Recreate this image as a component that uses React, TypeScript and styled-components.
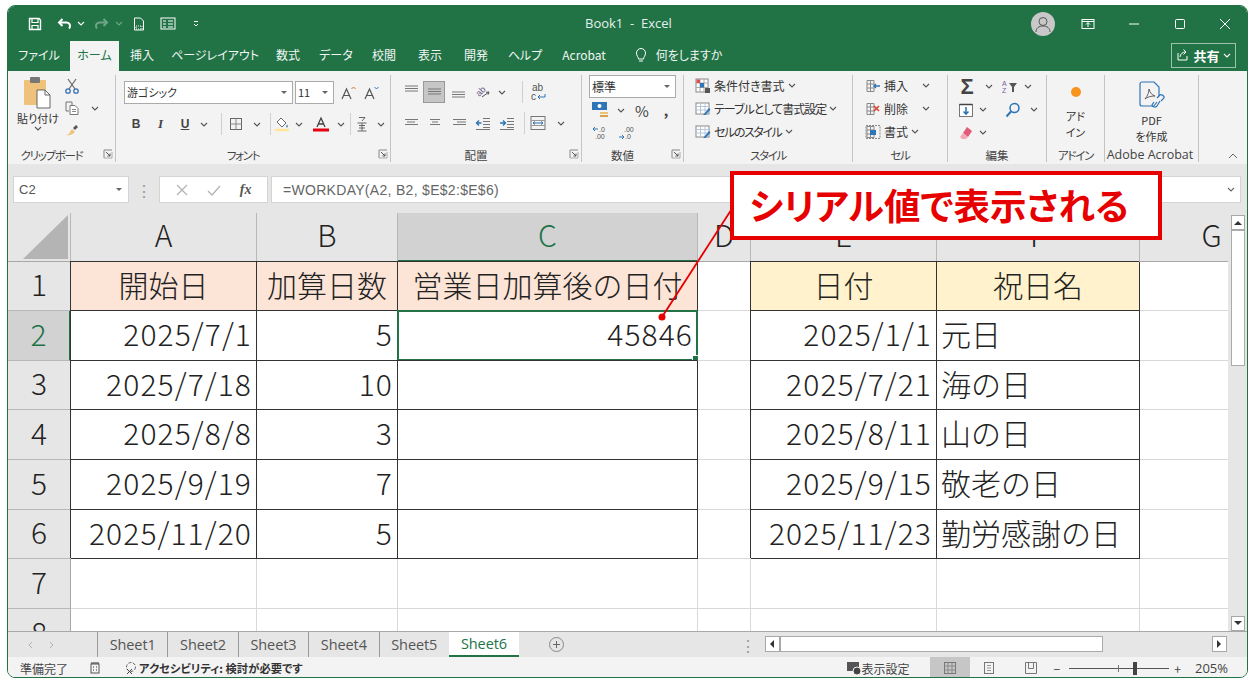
import React from 'react';
import styled, { createGlobalStyle } from 'styled-components';

const GREEN = '#217346';
const RED = '#e60000';
const JP = '"Noto Sans CJK JP", "Noto Sans", sans-serif';

const GlobalStyle = createGlobalStyle`
  html, body { margin: 0; padding: 0; background: #fff; }
  body { font-family: ${JP}; color: #333; overflow: hidden; }
  * { box-sizing: border-box; }
`;

const IconSvg = styled.svg`
  display: block;
  flex: none;
`;

type SvgProps = { size?: number; h?: number; children: React.ReactNode };
const Ico = ({ size = 16, h, children }: SvgProps) => (
  <IconSvg width={size} height={h ?? size} viewBox={`0 0 ${size} ${h ?? size}`} fill="none">
    {children}
  </IconSvg>
);

const Chev = ({ c = '#555' }: { c?: string }) => (
  <IconSvg width="8" height="5" viewBox="0 0 8 5" fill="none">
    <path d="M1 1l3 3 3-3" stroke={c} strokeWidth="1.1" />
  </IconSvg>
);

const Lines = ({ rows, top = 4.5 }: { rows: [number, number][]; top?: number }) => (
  <Ico size={16}>
    {rows.map(([a, b], i) => (
      <path key={i} d={`M${a} ${top + i * 2.5}H${b}`} stroke="#777" strokeWidth="1" />
    ))}
  </Ico>
);

const Tool = styled.div<{ $w?: number; $on?: boolean; $sep?: boolean; $h?: number; $pl?: number }>`
  width: ${(p) => p.$w ?? 20}px;
  height: ${(p) => p.$h ?? 22}px;
  padding-left: ${(p) => p.$pl ?? 0}px;
  flex: none;
  display: flex;
  align-items: center;
  justify-content: center;
  font-size: 12px;
  color: #444;
  background: ${(p) => (p.$on ? '#c6c6c6' : 'transparent')};
  border: ${(p) => (p.$on ? '1px solid #999' : 'none')};
  border-right: ${(p) => (p.$sep ? '1px solid #d0d0d0' : undefined)};
`;

const BoldGlyph = styled(Tool)`
  font: 700 12px "Liberation Sans", sans-serif;
`;

const ItalicGlyph = styled(Tool)`
  font: italic 700 13px "Liberation Serif", serif;
`;

const UnderGlyph = styled(BoldGlyph)`
  text-decoration: underline;
`;

const PercentGlyph = styled(Tool)`
  font-size: 15px;
`;

const CommaGlyph = styled(Tool)`
  font-size: 14px;
  font-weight: 700;
`;

const SigmaGlyph = styled(Tool)`
  font: 700 22px "Liberation Sans", sans-serif;
  color: #444;
`;

const Window = styled.div`
  width: 1241px;
  height: 673px;
  margin: 5px 0 0 7px;
  border: 1px solid ${GREEN};
  border-radius: 8px;
  overflow: hidden;
  display: flex;
  flex-direction: column;
  background: #f3f3f3;
`;

const TitleBar = styled.header`
  height: 35px;
  flex: none;
  background: ${GREEN};
  display: flex;
  align-items: center;
  position: relative;
  padding: 0 0 0 17px;
  color: #fff;
`;

const Qat = styled.div<{ $w: number; $dim?: boolean; $ml?: number }>`
  width: ${(p) => p.$w}px;
  margin-left: ${(p) => p.$ml ?? 0}px;
  flex: none;
  display: flex;
  justify-content: center;
  opacity: ${(p) => (p.$dim ? 0.35 : 1)};
`;

const Title = styled.div`
  position: absolute;
  left: 577px;
  top: 9px;
  font-size: 13px;
  line-height: 16px;
  color: #e6f0ea;
  white-space: pre;
  font-family: "Open Sans", sans-serif;
`;

const Spacer = styled.div`
  flex: 1;
`;

const Avatar = styled.div`
  width: 24px;
  height: 24px;
  border-radius: 50%;
  background: #c8c8c8;
  margin-right: 10px;
  display: flex;
  align-items: center;
  justify-content: center;
`;

const TabBar = styled.nav`
  height: 30px;
  flex: none;
  background: ${GREEN};
  display: flex;
  align-items: stretch;
`;

const TabItem = styled.div<{ $w: number; $active?: boolean }>`
  width: ${(p) => p.$w}px;
  flex: none;
  display: flex;
  align-items: center;
  justify-content: center;
  padding-bottom: 3px;
  font-size: 12px;
  white-space: nowrap;
  font-feature-settings: "palt";
  color: ${(p) => (p.$active ? '#217346' : '#f1f6f3')};
  background: ${(p) => (p.$active ? '#f3f3f3' : 'transparent')};
`;

const ShareButton = styled.div`
  width: 65px;
  height: 25px;
  margin: 2px 11px 0 0;
  border: 1px solid #9dc3ad;
  display: flex;
  align-items: center;
  justify-content: center;
  gap: 3px;
  padding-bottom: 1px;
  color: #fff;
  font-size: 13px;
  font-weight: 700;
`;

const Ribbon = styled.section`
  height: 93px;
  flex: none;
  display: flex;
  background: #f3f3f3;
  position: relative;
`;

const Group = styled.div<{ $w: number }>`
  width: ${(p) => p.$w}px;
  flex: none;
  margin-top: 4px;
  margin-bottom: 2px;
  border-right: 1px solid #c4c4c4;
  display: flex;
  flex-direction: column;
  position: relative;
`;

const GroupBody = styled.div`
  flex: 1;
  min-height: 0;
  display: flex;
`;

const GroupLabel = styled.div<{ $launcher?: boolean; $kana?: boolean }>`
  height: 15px;
  flex: none;
  display: flex;
  align-items: center;
  justify-content: center;
  padding-right: ${(p) => (p.$launcher ? 20 : 0)}px;
  font-size: 11.5px;
  letter-spacing: ${(p) => (p.$kana ? -1.3 : 0)}px;
  font-feature-settings: "palt";
  color: #444;
  white-space: nowrap;
`;

const AcrobatLabel = styled(GroupLabel)`
  font: 12.5px "Open Sans", sans-serif;
  padding-right: 3px;
`;

const LauncherWrap = styled.div`
  position: absolute;
  right: 2px;
  bottom: 3px;
`;

const Launcher = () => (
  <LauncherWrap>
    <Ico size={10}>
      <path d="M1 9V1h8" stroke="#888" />
      <path d="M1 9h8V3" stroke="#aaa" />
      <path d="M3 3l4 4M7 4.500V7H4.500" stroke="#555" />
    </Ico>
  </LauncherWrap>
);

const Stack = styled.div<{ $w?: number; $pl?: number; $pt?: number; $gap?: number; $center?: boolean }>`
  width: ${(p) => (p.$w ? `${p.$w}px` : 'auto')};
  flex: none;
  padding-left: ${(p) => p.$pl ?? 0}px;
  padding-top: ${(p) => p.$pt ?? 0}px;
  display: flex;
  flex-direction: column;
  gap: ${(p) => p.$gap ?? 0}px;
  align-items: ${(p) => (p.$center ? 'center' : 'flex-start')};
`;

const Row = styled.div`
  display: flex;
  align-items: center;
`;

const SmallText = styled.div`
  font-size: 11px;
  line-height: 16px;
  font-feature-settings: "palt";
  color: #333;
  text-align: center;
  white-space: nowrap;
`;

const Select = styled.div<{ $w: number; $ml?: number; $large?: boolean }>`
  width: ${(p) => p.$w}px;
  height: 23px;
  margin-left: ${(p) => p.$ml ?? 0}px;
  flex: none;
  background: #fff;
  border: 1px solid #ababab;
  display: flex;
  align-items: center;
  justify-content: space-between;
  padding: 0 5px 1px 2px;
  font-size: ${(p) => (p.$large ? 12 : 11)}px;
  font-feature-settings: "palt";
  color: #333;
`;

const Arrow = styled.div`
  width: 0;
  height: 0;
  border-left: 3px solid transparent;
  border-right: 3px solid transparent;
  border-top: 3px solid #666;
`;

const StyleItem = styled.div<{ $w?: number; $track?: number }>`
  height: 23px;
  width: ${(p) => (p.$w ? `${p.$w}px` : 'auto')};
  padding-bottom: 2px;
  display: flex;
  align-items: center;
  gap: 3px;
  font-size: 12px;
  font-feature-settings: "palt";
  letter-spacing: ${(p) => p.$track ?? 0}px;
  color: #333;
  white-space: nowrap;
`;

const Collapse = styled.div`
  position: absolute;
  right: 9px;
  bottom: 5px;
`;

const FormulaBand = styled.div`
  height: 49px;
  flex: none;
  background: #e6e6e6;
  padding: 12px 6px 10px 5px;
  display: flex;
  align-items: stretch;
`;

const NameBox = styled.div`
  width: 116px;
  background: #fff;
  border: 1px solid #d4d4d4;
  display: flex;
  align-items: center;
  justify-content: space-between;
  padding: 0 6px 0 5px;
  font: 13px "Liberation Sans", sans-serif;
  color: #555;
`;

const Grip = styled.div`
  width: 30px;
  display: flex;
  align-items: center;
  justify-content: center;
  color: #999;
`;

const FxBox = styled.div`
  width: 109px;
  margin-right: 3px;
  background: #fff;
  border: 1px solid #d4d4d4;
  display: flex;
  align-items: center;
  justify-content: space-around;
  padding: 0 6px;
`;

const FxLabel = styled.i`
  font: italic 700 14px "Liberation Serif", serif;
  color: #555;
`;

const FormulaInput = styled.div`
  flex: 1;
  background: #fff;
  border: 1px solid #d4d4d4;
  display: flex;
  align-items: center;
  justify-content: space-between;
  padding: 0 5px 0 11px;
  font: 14px "Liberation Sans", sans-serif;
  color: #666;
  letter-spacing: 0.3px;
`;

const SheetArea = styled.div`
  height: 418px;
  flex: none;
  display: flex;
  background: #e6e6e6;
  overflow: hidden;
`;

const Cells = styled.div`
  width: 1220px;
  flex: none;
  overflow: hidden;
  display: grid;
  grid-template-columns: 63px 186px 141px 300px 53px 186px 203px 144px;
  grid-template-rows: 49px 49px 50px 49px 50px 50px 49px 50px 50px;
  background: #fff;
  font-size: 30px;
  font-weight: 300;
  line-height: 1;
  color: #222;
`;

const ColHead = styled.div<{ $sel?: boolean }>`
  background: ${(p) => (p.$sel ? '#d2d2d2' : '#e6e6e6')};
  color: ${(p) => (p.$sel ? GREEN : '#222')};
  border-right: 1px solid #b8b8b8;
  border-bottom: ${(p) => (p.$sel ? `2px solid ${GREEN}` : '1px solid #a8a8a8')};
  display: flex;
  align-items: center;
  justify-content: center;
  padding-bottom: 6px;
  overflow: hidden;
`;

const Corner = styled.div`
  background: #e6e6e6;
  border-right: 1px solid #b8b8b8;
  border-bottom: 1px solid #a8a8a8;
  display: flex;
  align-items: flex-end;
  justify-content: flex-end;
  padding: 0 2px 2px 0;
`;

const RowHead = styled.div<{ $sel?: boolean }>`
  background: ${(p) => (p.$sel ? '#d2d2d2' : '#e6e6e6')};
  color: ${(p) => (p.$sel ? GREEN : '#222')};
  border-right: ${(p) => (p.$sel ? `2px solid ${GREEN}` : '1px solid #a8a8a8')};
  border-bottom: 1px solid #b8b8b8;
  display: flex;
  align-items: center;
  justify-content: center;
  padding-bottom: 6px;
  overflow: hidden;
`;

const Cell = styled.div<{ $fill?: string; $edge?: boolean; $align?: string; $num?: boolean }>`
  position: relative;
  background: ${(p) => p.$fill ?? '#fff'};
  border-right: ${(p) => (p.$edge ? 'none' : '1px solid #d8d8d8')};
  border-bottom: ${(p) => (p.$edge ? 'none' : '1px solid #d8d8d8')};
  box-shadow: ${(p) => (p.$edge ? '-1px -1px 0 0 #333, inset -1px -1px 0 0 #333' : 'none')};
  display: flex;
  align-items: center;
  justify-content: ${(p) => p.$align ?? 'flex-end'};
  padding: 0 5px 6px 4px;
  white-space: nowrap;
  letter-spacing: ${(p) => (p.$num ? 1.1 : 0)}px;
`;

const ActiveFrame = styled.div`
  position: absolute;
  inset: -1px 0 0 -1px;
  border: 2px solid ${GREEN};
  pointer-events: none;
  &::after {
    content: '';
    position: absolute;
    right: -4px;
    bottom: -4px;
    width: 6px;
    height: 6px;
    background: ${GREEN};
    border: 1px solid #fff;
  }
`;

const VScroll = styled.div`
  flex: 1;
  padding: 2px 2px 0 3px;
  display: flex;
  flex-direction: column;
`;

const ScrollBtn = styled.div`
  height: 15px;
  flex: none;
  background: #fff;
  border: 1px solid #a8a8a8;
  display: flex;
  align-items: center;
  justify-content: center;
`;

const VThumb = styled.div`
  height: 136px;
  flex: none;
  background: #fff;
  border: 1px solid #ababab;
`;

const TabStrip = styled.div`
  height: 26px;
  flex: none;
  background: #e6e6e6;
  border-top: 1px solid #a8a8a8;
  display: flex;
  align-items: stretch;
`;

const NavArrows = styled.div`
  width: 89px;
  flex: none;
  padding-left: 20px;
  display: flex;
  align-items: center;
  gap: 16px;
`;

const SheetTab = styled.div<{ $active?: boolean }>`
  width: ${(p) => (p.$active ? 70 : 70.4)}px;
  flex: none;
  display: flex;
  align-items: center;
  justify-content: center;
  font: 14.5px "Open Sans", sans-serif;
  letter-spacing: -0.1px;
  color: ${(p) => (p.$active ? GREEN : '#555')};
  background: ${(p) => (p.$active ? '#fff' : 'transparent')};
  border-left: ${(p) => (p.$active ? 'none' : '1px solid #999')};
  border-bottom: ${(p) => (p.$active ? `2px solid ${GREEN}` : 'none')};
`;

const PlusWrap = styled.div`
  width: 76px;
  flex: none;
  display: flex;
  align-items: center;
  justify-content: center;
`;

const HScrollDots = styled.div`
  width: 170px;
  flex: none;
  display: flex;
  align-items: center;
  justify-content: flex-end;
  padding-right: 9px;
  color: #999;
`;

const HScroll = styled.div`
  width: 462px;
  height: 16px;
  margin-top: 4px;
  flex: none;
  display: flex;
  background: #e6e6e6;
`;

const HBtn = styled.div`
  width: 15px;
  flex: none;
  background: #fff;
  border: 1px solid #a8a8a8;
  display: flex;
  align-items: center;
  justify-content: center;
`;

const HThumb = styled.div`
  width: 323px;
  flex: none;
  background: #fff;
  border: 1px solid #ababab;
`;

const StatusBar = styled.footer`
  flex: 1;
  background: #f3f3f3;
  display: flex;
  align-items: center;
  padding-left: 12px;
  font-size: 12px;
  font-feature-settings: "palt";
  color: #444;
  white-space: nowrap;
`;

const A11y = styled.b`
  margin-left: 1px;
  font-size: 11.3px;
  color: #333;
`;

const ViewLabel = styled.span`
  margin-right: 20px;
`;

const ViewBtn = styled.div<{ $w: number; $on?: boolean }>`
  width: ${(p) => p.$w}px;
  align-self: stretch;
  flex: none;
  display: flex;
  align-items: center;
  justify-content: center;
  background: ${(p) => (p.$on ? '#c6c6c6' : 'transparent')};
`;

const ZoomTrack = styled.div`
  width: 100px;
  height: 1px;
  margin: 0 5px 0 9px;
  flex: none;
  background: #555;
  position: relative;
`;

const ZoomTick = styled.div`
  position: absolute;
  left: 49px;
  top: -3px;
  width: 1px;
  height: 7px;
  background: #777;
`;

const ZoomThumb = styled.div`
  position: absolute;
  left: 64px;
  top: -6px;
  width: 4px;
  height: 13px;
  background: #444;
`;

const ZoomValue = styled.span`
  margin: 0 19px 0 14px;
  font: 13px "Open Sans", sans-serif;
`;

const Callout = styled.div`
  position: absolute;
  left: 730px;
  top: 171px;
  width: 432px;
  height: 69px;
  background: #fff;
  border: 4px solid ${RED};
  display: flex;
  align-items: center;
  justify-content: center;
  padding: 0 14px 2px 0;
  color: ${RED};
  font-size: 36.5px;
  font-weight: 700;
  white-space: nowrap;
  font-feature-settings: "palt";
`;

const Leader = styled.svg`
  position: absolute;
  left: 650px;
  top: 190px;
`;

const tabs: [string, number, boolean?][] = [
  ['ファイル', 62], ['ホーム', 49, true], ['挿入', 46], ['ページレイアウト', 100], ['数式', 46], ['データ', 50],
  ['校閲', 46], ['表示', 46], ['開発', 46], ['ヘルプ', 52], ['Acrobat', 66],
];

const columns = ['A', 'B', 'C', 'D', 'E', 'F', 'G'];
const peach = '#fce4d6';
const cream = '#fff2cc';

type SheetRow = { a?: string; b?: string; c?: string; e?: string; f?: string };
const rows: SheetRow[] = [
  { a: '開始日', b: '加算日数', c: '営業日加算後の日付', e: '日付', f: '祝日名' },
  { a: '2025/7/1', b: '5', c: '45846', e: '2025/1/1', f: '元日' },
  { a: '2025/7/18', b: '10', c: '', e: '2025/7/21', f: '海の日' },
  { a: '2025/8/8', b: '3', c: '', e: '2025/8/11', f: '山の日' },
  { a: '2025/9/19', b: '7', c: '', e: '2025/9/15', f: '敬老の日' },
  { a: '2025/11/20', b: '5', c: '', e: '2025/11/23', f: '勤労感謝の日' },
  {},
  {},
];

const SaveIcon = () => (
  <Ico size={14}>
    <path d="M1.5 1.5h9.5l1.5 1.5v9.5h-11z" stroke="#fff" strokeWidth="1.4" />
    <path d="M4 2v3.5h6V2M4 12.500V8.500h6v4" stroke="#fff" strokeWidth="1.2" />
  </Ico>
);

const UndoIcon = ({ flip }: { flip?: boolean }) => (
  <Ico size={16}>
    <g transform={flip ? 'matrix(-1 0 0 1 16 0)' : undefined}>
      <path d="M5.500 3L2 6.500 5.500 10" stroke="#fff" strokeWidth="2" />
      <path d="M2.500 6.500h7c2.500 0 3.500 2 3.500 3.500s-.5 2-1 2.500" stroke="#fff" strokeWidth="2" />
    </g>
  </Ico>
);

const PasteIcon = () => (
  <Ico size={30} h={34}>
    <rect x="1" y="4" width="22" height="25" rx="1" fill="#eec27a" />
    <rect x="7" y="1" width="10" height="6" rx="1" fill="#777" />
    <path d="M14 14h8l5 5v13H14z" fill="#fff" stroke="#666" />
    <path d="M22 14v5h5" stroke="#666" />
  </Ico>
);

const ScissorsIcon = () => (
  <Ico size={16}>
    <path d="M4 1l7 10M12 1L5 11" stroke="#666" strokeWidth="1.2" />
    <circle cx="4" cy="13" r="2.200" stroke="#3a70b0" strokeWidth="1.3" />
    <circle cx="12" cy="13" r="2.200" stroke="#3a70b0" strokeWidth="1.3" />
  </Ico>
);

const CopyIcon = () => (
  <Ico size={16}>
    <path d="M2 2h6v3M2 2v9h3" stroke="#777" />
    <path d="M6 5.500h5l3 3v6H6z" fill="#fff" stroke="#777" />
    <path d="M8 9.500h4M8 11.500h4" stroke="#888" />
  </Ico>
);

const BrushIcon = () => (
  <Ico size={16}>
    <path d="M9 6l3-3 2 2-3 3z" fill="#555" />
    <path d="M2 13c3 0 4-3 6-6l3 3c-2 2-5 4-9 3z" fill="#eec27a" />
  </Ico>
);

const GrowA = ({ up }: { up: boolean }) => (
  <Ico size={16}>
    <path d="M2 14L6.500 4 11 14M3.800 10.500h5.400" stroke="#555" strokeWidth="1.2" />
    <path d={up ? 'M11.500 4l2-2 2 2' : 'M11.500 2l2 2 2-2'} stroke={up ? '#c07a30' : '#3a70b0'} />
  </Ico>
);

const BordersIcon = () => (
  <Ico size={14}>
    <rect x="1.500" y="1.500" width="11" height="11" stroke="#666" />
    <path d="M7 1.500v11M1.500 7h11" stroke="#888" />
  </Ico>
);

const FillIcon = () => (
  <Ico size={16}>
    <path d="M7 2l5 5-4 4-5-5z" fill="#fff" stroke="#666" />
    <path d="M13 8.500c1 1.500 1 3 0 3s-1-1.500 0-3z" fill="#3a70b0" />
    <path d="M1 14h14" stroke="#ffe699" strokeWidth="2.500" />
  </Ico>
);

const FontColorIcon = () => (
  <Ico size={16}>
    <path d="M4 11L8 2l4 9M5.300 8h5.400" stroke="#444" strokeWidth="1.300" />
    <path d="M0 14h16" stroke="#e60012" strokeWidth="3" />
  </Ico>
);

const PhoneticIcon = () => (
  <Ico size={12} h={16}>
    <path d="M3 1.500h6L6 5M1.500 7h9M3 9.500h6M3 12h6M6 7v8M1.500 15h9" stroke="#666" />
  </Ico>
);

const OrientIcon = () => (
  <Ico size={18}>
    <text x="2" y="12" fontSize="9" fontFamily="Liberation Sans" fill="#6a5a86" transform="rotate(-45 6 9)">ab</text>
    <path d="M8 14l7-5M15 9l-3 .3M15 9l-1 2.700" stroke="#555" />
  </Ico>
);

const WrapIcon = () => (
  <Ico size={20}>
    <text x="4" y="9" fontSize="10" fontFamily="Liberation Sans" fill="#555">ab</text>
    <text x="3" y="18" fontSize="10" fontFamily="Liberation Sans" fill="#555">c</text>
    <path d="M10 15h7v-3M10 15l2-2M10 15l2 2" stroke="#2e75b6" />
  </Ico>
);

const IndentIcon = ({ right }: { right?: boolean }) => (
  <Ico size={16}>
    <path d="M8 3.500h7M8 6.500h7M8 9.500h7M8 12.500h7M1 14.500h14" stroke="#777" />
    <path d={right ? 'M1 8h5M4 5.500L6.500 8 4 10.500' : 'M6.500 8h-5M4 5.500L1.500 8 4 10.500'} stroke="#2e75b6" strokeWidth="1.400" />
  </Ico>
);

const MergeIcon = () => (
  <Ico size={16}>
    <rect x="1" y="1.500" width="14" height="13" stroke="#777" />
    <path d="M1 5.500h14M1 10.500h14" stroke="#999" />
    <path d="M3 8h10M3 8l2-1.500M3 8l2 1.500M13 8l-2-1.500M13 8l-2 1.500" stroke="#2e75b6" />
  </Ico>
);

const CurrencyIcon = () => (
  <Ico size={20} h={18}>
    <rect x="1" y="1" width="15" height="8" fill="#2e75b6" />
    <circle cx="8.500" cy="5" r="2" fill="#fff" />
    <rect x="9" y="11" width="8" height="2" fill="#eec27a" />
    <rect x="9" y="14" width="8" height="2" fill="#d8a24a" />
  </Ico>
);

const DecimalIcon = ({ more }: { more?: boolean }) => (
  <Ico size={18} h={16}>
    <path d={more ? 'M1 4h5M1 4l2-2M1 4l2 2' : 'M2 12h5M7 12l-2-2M7 12l-2 2'} stroke="#2e75b6" />
    <text x="7" y="7" fontSize="7" fontFamily="Liberation Sans" fill="#555">{more ? '.0' : '.00'}</text>
    <text x={more ? 3 : 8} y="14" fontSize="7" fontFamily="Liberation Sans" fill="#555">{more ? '.00' : '.0'}</text>
  </Ico>
);

const CondIcon = () => (
  <Ico size={16}>
    <rect x="1" y="1" width="12" height="13" fill="#fff" stroke="#888" />
    <path d="M5 1v13M9 1v13M1 5h12M1 9.500h12" stroke="#aaa" />
    <rect x="1.500" y="1.500" width="3.500" height="3.500" fill="#d9534f" />
    <rect x="5" y="5" width="4" height="4.500" fill="#2e75b6" />
    <rect x="10" y="10" width="5" height="5" fill="#555" />
  </Ico>
);

const TableIcon = () => (
  <Ico size={16}>
    <rect x="1" y="2" width="13" height="11" fill="#fff" stroke="#888" />
    <path d="M1 5.500h13M1 9h13M5.500 2v11M10 2v11" stroke="#b4c6dc" />
    <path d="M9 13l5-6 1.500 1.500-5 5.500H8z" fill="#2e75b6" />
  </Ico>
);

const CellIcon = ({ kind }: { kind: 'ins' | 'del' | 'fmt' }) => (
  <Ico size={16}>
    <path d="M2 2.500h7v11H2zM2 6h7M2 10h7M5.500 2.500v11" stroke="#888" />
    {kind === 'ins' && <path d="M15 8H9M11 6L9 8l2 2" stroke="#2e75b6" strokeWidth="1.300" />}
    {kind === 'del' && <path d="M9 5l5 5M14 5l-5 5" stroke="#d9442f" strokeWidth="1.600" />}
    {kind === 'fmt' && <path d="M1 1.500h14v13H1z" stroke="#888" strokeDasharray="2 1" />}
    {kind === 'fmt' && <rect x="5" y="6" width="6" height="5" fill="#2e75b6" />}
  </Ico>
);

const SortIcon = () => (
  <Ico size={18} h={16}>
    <text x="0" y="7" fontSize="7" fontFamily="Liberation Sans" fill="#7a5aa6">A</text>
    <text x="0" y="14" fontSize="7" fontFamily="Liberation Sans" fill="#7a5aa6">Z</text>
    <path d="M7 4h8l-3 4v5h-2V8z" fill="#555" />
  </Ico>
);

const DownFill = () => (
  <Ico size={16}>
    <rect x="1.500" y="2.500" width="13" height="12" fill="#fff" stroke="#777" />
    <path d="M1.500 2.500h13" stroke="#444" strokeWidth="1.500" />
    <path d="M8 5v7M5.500 9.500L8 12l2.500-2.500" stroke="#2e75b6" strokeWidth="1.600" />
  </Ico>
);

const EraserIcon = () => (
  <Ico size={16}>
    <path d="M9 2l5 4-4 6-5-4z" fill="#e25a77" />
    <path d="M5 8l5 4-2 2H4L2 12z" fill="#f3a8b8" />
  </Ico>
);

const FindIcon = () => (
  <Ico size={16}>
    <circle cx="9.500" cy="6" r="4.500" stroke="#2e75b6" strokeWidth="1.500" />
    <path d="M6 9.500l-4.500 5" stroke="#2e75b6" strokeWidth="2" />
  </Ico>
);

const PdfIcon = () => (
  <Ico size={28} h={32}>
    <path d="M4 2h12l5 5v9M4 2a2 2 0 0 0-2 2v20a2 2 0 0 0 2 2h11" stroke="#2e75b6" strokeWidth="1.200" />
    <path d="M7 19c3-3 4-8 4-10 1 4 3 6 6 7-4 0-8 1-10 3z" stroke="#444" strokeWidth=".8" />
    <path d="M15 27l4-5M19 18l3-3c1-1 5 1 4 3l-3 3M22 21l-3 5c-1 2-5 1-5-1l2-3" stroke="#2e75b6" strokeWidth="1.200" />
  </Ico>
);

const full: [number, number][] = [[2, 15], [2, 15], [2, 15]];

export default function App() {
  return (
    <>
      <GlobalStyle />
      <Window>
        <TitleBar>
          <Qat $w={20}><SaveIcon /></Qat>
          <Qat $w={24} $ml={8}><UndoIcon /></Qat>
          <Qat $w={8}><Chev c="#fff" /></Qat>
          <Qat $w={16} $ml={8} $dim><UndoIcon flip /></Qat>
          <Qat $w={8} $ml={6} $dim><Chev c="#fff" /></Qat>
          <Qat $w={16} $ml={8}>
            <Ico size={14}>
              <path d="M2.500 1h6l3 3v9h-9z" stroke="#fff" />
              <path d="M4 9h6v3H4z" stroke="#fff" strokeDasharray="1 1" />
            </Ico>
          </Qat>
          <Qat $w={16} $ml={13}>
            <Ico size={16}>
              <rect x="1" y="2" width="14" height="11" stroke="#fff" />
              <path d="M3 5h3M3 8h3M3 11h3M8 5h5M8 8h5M8 11h5" stroke="#fff" />
            </Ico>
          </Qat>
          <Qat $w={8} $ml={16}>
            <Ico size={8}>
              <path d="M2 1.500h4M2 4l2 2 2-2" stroke="#fff" />
            </Ico>
          </Qat>
          <Title>Book1  -  Excel</Title>
          <Spacer />
          <Avatar>
            <Ico size={16}>
              <circle cx="8" cy="5.500" r="4" stroke="#555" />
              <path d="M1 16c0-4 3-6 7-6s7 2 7 6" stroke="#555" />
            </Ico>
          </Avatar>
          <Qat $w={46}>
            <Ico size={14}>
              <rect x="1" y="2.500" width="12" height="9" stroke="#fff" />
              <path d="M1 4.500h12M7 10V6M5 7.500L7 5.500l2 2" stroke="#fff" />
            </Ico>
          </Qat>
          <Qat $w={46}>
            <Ico size={12}><path d="M1 6h10" stroke="#fff" /></Ico>
          </Qat>
          <Qat $w={46}>
            <Ico size={12}><rect x="1.500" y="1.500" width="9" height="9" rx="1" stroke="#fff" /></Ico>
          </Qat>
          <Qat $w={44}>
            <Ico size={12}><path d="M1 1l10 10M11 1L1 11" stroke="#fff" /></Ico>
          </Qat>
        </TitleBar>

        <TabBar>
          {tabs.map(([label, w, active]) => (
            <TabItem key={label} $w={w} $active={active}>{label}</TabItem>
          ))}
          <TabItem $w={48}>
            <Ico size={16}>
              <path d="M5.500 12c0-2-2-3-2-6a4.500 4.500 0 0 1 9 0c0 3-2 4-2 6zM6 14h4" stroke="#fff" />
            </Ico>
          </TabItem>
          <TabItem $w={48}>何をしますか</TabItem>
          <Spacer />
          <ShareButton>
            <Ico size={14}>
              <path d="M2 5v7h9V8M4 9c0-3 3-5 5-5M7.500 1.500L10 4 7.500 6.500" stroke="#fff" />
            </Ico>
            共有
            <Chev c="#fff" />
          </ShareButton>
        </TabBar>

        <Ribbon>
          <Group $w={108}>
            <GroupBody>
              <Stack $w={53} $pl={7} $pt={1} $center>
                <PasteIcon />
                <SmallText>貼り付け</SmallText>
                <Chev />
              </Stack>
              <Stack>
                <Tool $w={22}><ScissorsIcon /></Tool>
                <Row>
                  <Tool $w={22}><CopyIcon /></Tool>
                  <Tool $w={24}><Chev /></Tool>
                </Row>
                <Tool $w={22}><BrushIcon /></Tool>
              </Stack>
            </GroupBody>
            <GroupLabel $launcher $kana>クリップボード</GroupLabel>
            <Launcher />
          </Group>

          <Group $w={275}>
            <GroupBody>
              <Stack $pl={8} $pt={6} $gap={9}>
                <Row>
                  <Select $w={169}>游ゴシック<Arrow /></Select>
                  <Select $w={39} $ml={2}>11<Arrow /></Select>
                  <Tool $w={26} $pl={2}><GrowA up /></Tool>
                  <Tool $w={22}><GrowA up={false} /></Tool>
                </Row>
                <Row>
                  <BoldGlyph $w={24}>B</BoldGlyph>
                  <ItalicGlyph $w={25}>I</ItalicGlyph>
                  <UnderGlyph $w={24}>U</UnderGlyph>
                  <Tool $w={14}><Chev /></Tool>
                  <Tool $w={11} $sep />
                  <Tool $w={28}><BordersIcon /></Tool>
                  <Tool $w={14}><Chev /></Tool>
                  <Tool $w={7} $sep />
                  <Tool $w={22}><FillIcon /></Tool>
                  <Tool $w={12}><Chev /></Tool>
                  <Tool $w={32}><FontColorIcon /></Tool>
                  <Tool $w={8}><Chev /></Tool>
                  <Tool $w={6} $sep />
                  <Tool $w={22}><PhoneticIcon /></Tool>
                  <Tool $w={16}><Chev /></Tool>
                </Row>
              </Stack>
            </GroupBody>
            <GroupLabel $launcher $kana>フォント</GroupLabel>
            <Launcher />
          </Group>

          <Group $w={191}>
            <GroupBody>
              <Stack $pl={8} $pt={6} $gap={9}>
                <Row>
                  <Tool $w={24}><Lines rows={full} top={2} /></Tool>
                  <Tool $w={22} $on><Lines rows={full} top={5} /></Tool>
                  <Tool $w={26}><Lines rows={full} top={8} /></Tool>
                  <Tool $w={24}><OrientIcon /></Tool>
                  <Tool $w={14}><Chev /></Tool>
                  <Tool $w={14} $sep />
                  <Tool $w={30}><WrapIcon /></Tool>
                </Row>
                <Row>
                  <Tool $w={24}><Lines rows={[[2, 15], [4, 12], [2, 15]]} /></Tool>
                  <Tool $w={24}><Lines rows={[[3, 13], [5, 11], [3, 13]]} /></Tool>
                  <Tool $w={24}><Lines rows={[[2, 15], [6, 15], [2, 15]]} /></Tool>
                  <Tool $w={24}><IndentIcon /></Tool>
                  <Tool $w={24}><IndentIcon right /></Tool>
                  <Tool $w={6} $sep />
                  <Tool $w={26}><MergeIcon /></Tool>
                  <Tool $w={20}><Chev /></Tool>
                </Row>
              </Stack>
            </GroupBody>
            <GroupLabel $launcher>配置</GroupLabel>
            <Launcher />
          </Group>

          <Group $w={102}>
            <GroupBody>
              <Stack $pl={7} $gap={1}>
                <Select $w={87} $large>標準<Arrow /></Select>
                <Row>
                  <Tool $w={24}><CurrencyIcon /></Tool>
                  <Tool $w={16}><Chev /></Tool>
                  <PercentGlyph $w={26}>%</PercentGlyph>
                  <CommaGlyph $w={22}>,</CommaGlyph>
                </Row>
                <Row>
                  <Tool $w={24}><DecimalIcon more /></Tool>
                  <Tool $w={26}><DecimalIcon /></Tool>
                </Row>
              </Stack>
            </GroupBody>
            <GroupLabel $launcher>数値</GroupLabel>
            <Launcher />
          </Group>

          <Group $w={169}>
            <GroupBody>
              <Stack $pl={11}>
                <StyleItem><CondIcon />条件付き書式<Chev /></StyleItem>
                <StyleItem $track={-1}><TableIcon />テーブルとして書式設定<Chev /></StyleItem>
                <StyleItem $track={-1.4}><TableIcon />セルのスタイル<Chev /></StyleItem>
              </Stack>
            </GroupBody>
            <GroupLabel $kana>スタイル</GroupLabel>
          </Group>

          <Group $w={95}>
            <GroupBody>
              <Stack $pl={12}>
                <StyleItem $w={65}><CellIcon kind="ins" />挿入<Spacer /><Chev /></StyleItem>
                <StyleItem $w={65}><CellIcon kind="del" />削除<Spacer /><Chev /></StyleItem>
                <StyleItem><CellIcon kind="fmt" />書式<Chev /></StyleItem>
              </Stack>
            </GroupBody>
            <GroupLabel $kana>セル</GroupLabel>
          </Group>

          <Group $w={99}>
            <GroupBody>
              <Stack $pl={8}>
                <Row>
                  <SigmaGlyph $w={22} $h={23}>Σ</SigmaGlyph>
                  <Tool $w={22}><Chev /></Tool>
                  <Tool $w={22} $h={23}><SortIcon /></Tool>
                  <Tool $w={12}><Chev /></Tool>
                </Row>
                <Row>
                  <Tool $w={20} $h={23}><DownFill /></Tool>
                  <Tool $w={14}><Chev /></Tool>
                  <Tool $w={38} $h={23} $pl={8}><FindIcon /></Tool>
                  <Tool $w={12}><Chev /></Tool>
                </Row>
                <Row>
                  <Tool $w={20} $h={23}><EraserIcon /></Tool>
                  <Tool $w={14}><Chev /></Tool>
                </Row>
              </Stack>
            </GroupBody>
            <GroupLabel>編集</GroupLabel>
          </Group>

          <Group $w={58}>
            <GroupBody>
              <Stack $w={57} $pt={11} $center $gap={10}>
                <Ico size={12}><circle cx="6" cy="6" r="5" fill="#f7941d" /></Ico>
                <SmallText>アド<br />イン</SmallText>
              </Stack>
            </GroupBody>
            <GroupLabel $kana>アドイン</GroupLabel>
          </Group>

          <Group $w={94}>
            <GroupBody>
              <Stack $w={93} $pt={5} $center>
                <PdfIcon />
                <SmallText>PDF<br />を作成</SmallText>
              </Stack>
            </GroupBody>
            <AcrobatLabel>Adobe Acrobat</AcrobatLabel>
          </Group>

          <Collapse>
            <Ico size={10} h={6}><path d="M1 5l4-4 4 4" stroke="#666" /></Ico>
          </Collapse>
        </Ribbon>

        <FormulaBand>
          <NameBox>C2<Arrow /></NameBox>
          <Grip>⋮</Grip>
          <FxBox>
            <Ico size={12}><path d="M1 1l10 10M11 1L1 11" stroke="#b4b4b4" strokeWidth="1.300" /></Ico>
            <Ico size={14}><path d="M1 8l4 4 8-9" stroke="#b4b4b4" strokeWidth="1.300" /></Ico>
            <FxLabel>fx</FxLabel>
          </FxBox>
          <FormulaInput>=WORKDAY(A2, B2, $E$2:$E$6)<Chev c="#666" /></FormulaInput>
        </FormulaBand>

        <SheetArea>
          <Cells>
            <Corner>
              <Ico size={45} h={44}><path d="M45 0v44H0z" fill="#b4b4b4" /></Ico>
            </Corner>
            {columns.map((c) => (
              <ColHead key={c} $sel={c === 'C'}>{c}</ColHead>
            ))}
            {rows.map((r, i) => {
              const filled = i < 6;
              const head = i === 0;
              return (
                <React.Fragment key={i}>
                  <RowHead $sel={i === 1}>{i + 1}</RowHead>
                  <Cell $edge={filled} $num={!head} $fill={head ? peach : undefined} $align={head ? 'center' : undefined}>{r.a}</Cell>
                  <Cell $edge={filled} $num={!head} $fill={head ? peach : undefined} $align={head ? 'center' : undefined}>{r.b}</Cell>
                  <Cell $edge={filled} $num={!head} $fill={head ? peach : undefined} $align={head ? 'center' : undefined}>
                    {r.c}
                    {i === 1 && <ActiveFrame />}
                  </Cell>
                  <Cell />
                  <Cell $edge={filled} $num={!head} $fill={head ? cream : undefined} $align={head ? 'center' : undefined}>{r.e}</Cell>
                  <Cell $edge={filled} $fill={head ? cream : undefined} $align={head ? 'center' : 'flex-start'}>{r.f}</Cell>
                  <Cell />
                </React.Fragment>
              );
            })}
          </Cells>
          <VScroll>
            <ScrollBtn><Ico size={8} h={5}><path d="M0 5l4-4 4 4z" fill="#333" /></Ico></ScrollBtn>
            <VThumb />
            <Spacer />
            <ScrollBtn><Ico size={8} h={5}><path d="M0 0l4 4 4-4z" fill="#333" /></Ico></ScrollBtn>
          </VScroll>
        </SheetArea>

        <TabStrip>
          <NavArrows>
            <Ico size={5} h={8}><path d="M4 1L1 4l3 3" stroke="#b0b0b0" /></Ico>
            <Ico size={5} h={8}><path d="M1 1l3 3-3 3" stroke="#b0b0b0" /></Ico>
          </NavArrows>
          {['Sheet1', 'Sheet2', 'Sheet3', 'Sheet4', 'Sheet5'].map((s) => (
            <SheetTab key={s}>{s}</SheetTab>
          ))}
          <SheetTab $active>Sheet6</SheetTab>
          <PlusWrap>
            <Ico size={17}>
              <circle cx="8.500" cy="8.500" r="7" stroke="#888" />
              <path d="M8.500 5v7M5 8.500h7" stroke="#666" />
            </Ico>
          </PlusWrap>
          <HScrollDots>⋮</HScrollDots>
          <HScroll>
            <HBtn><Ico size={4} h={8}><path d="M4 0L0 4l4 4z" fill="#333" /></Ico></HBtn>
            <HThumb />
            <Spacer />
            <HBtn><Ico size={4} h={8}><path d="M0 0l4 4-4 4z" fill="#333" /></Ico></HBtn>
          </HScroll>
        </TabStrip>

        <StatusBar>
          準備完了
          <Tool $w={54}>
            <Ico size={12}>
              <rect x="2" y="2" width="8" height="9" stroke="#555" />
              <path d="M2 1h8M4 5h1M7 5h1M4 8h1M7 8h1" stroke="#333" />
            </Ico>
          </Tool>
          <Ico size={16}>
            <circle cx="9" cy="7" r="4.500" stroke="#666" strokeDasharray="3 1.500" />
            <path d="M5 9l5 5M10 9l-5 5" stroke="#444" />
          </Ico>
          <A11y>アクセシビリティ: 検討が必要です</A11y>
          <Spacer />
          <Ico size={16}>
            <rect x="1" y="2" width="12" height="9" fill="#555" />
            <circle cx="11" cy="11" r="4" fill="#444" stroke="#f3f3f3" />
          </Ico>
          <ViewLabel>表示設定</ViewLabel>
          <ViewBtn $w={40} $on>
            <Ico size={14}>
              <rect x="1.500" y="1.500" width="11" height="11" stroke="#777" />
              <path d="M5 1.500v11M9 1.500v11M1.500 5h11M1.500 9h11" stroke="#888" />
            </Ico>
          </ViewBtn>
          <ViewBtn $w={38}>
            <Ico size={14}>
              <rect x="2.500" y="1.500" width="9" height="11" stroke="#777" />
              <path d="M5 4.500h4M5 7h4M5 9.500h4" stroke="#999" />
            </Ico>
          </ViewBtn>
          <ViewBtn $w={46}>
            <Ico size={14}>
              <path d="M1.500 1.500h11v11h-11zM4.500 1.500v6h5v-6" stroke="#777" />
            </Ico>
          </ViewBtn>
          <span>−</span>
          <ZoomTrack><ZoomTick /><ZoomThumb /></ZoomTrack>
          <span>+</span>
          <ZoomValue>205%</ZoomValue>
        </StatusBar>
      </Window>

      <Leader width="100" height="140" viewBox="0 0 100 140">
        <path d="M85 14L12 127" stroke={RED} strokeWidth="1.800" />
        <circle cx="12" cy="127" r="3.500" fill={RED} />
      </Leader>
      <Callout>シリアル値で表示される</Callout>
    </>
  );
}
